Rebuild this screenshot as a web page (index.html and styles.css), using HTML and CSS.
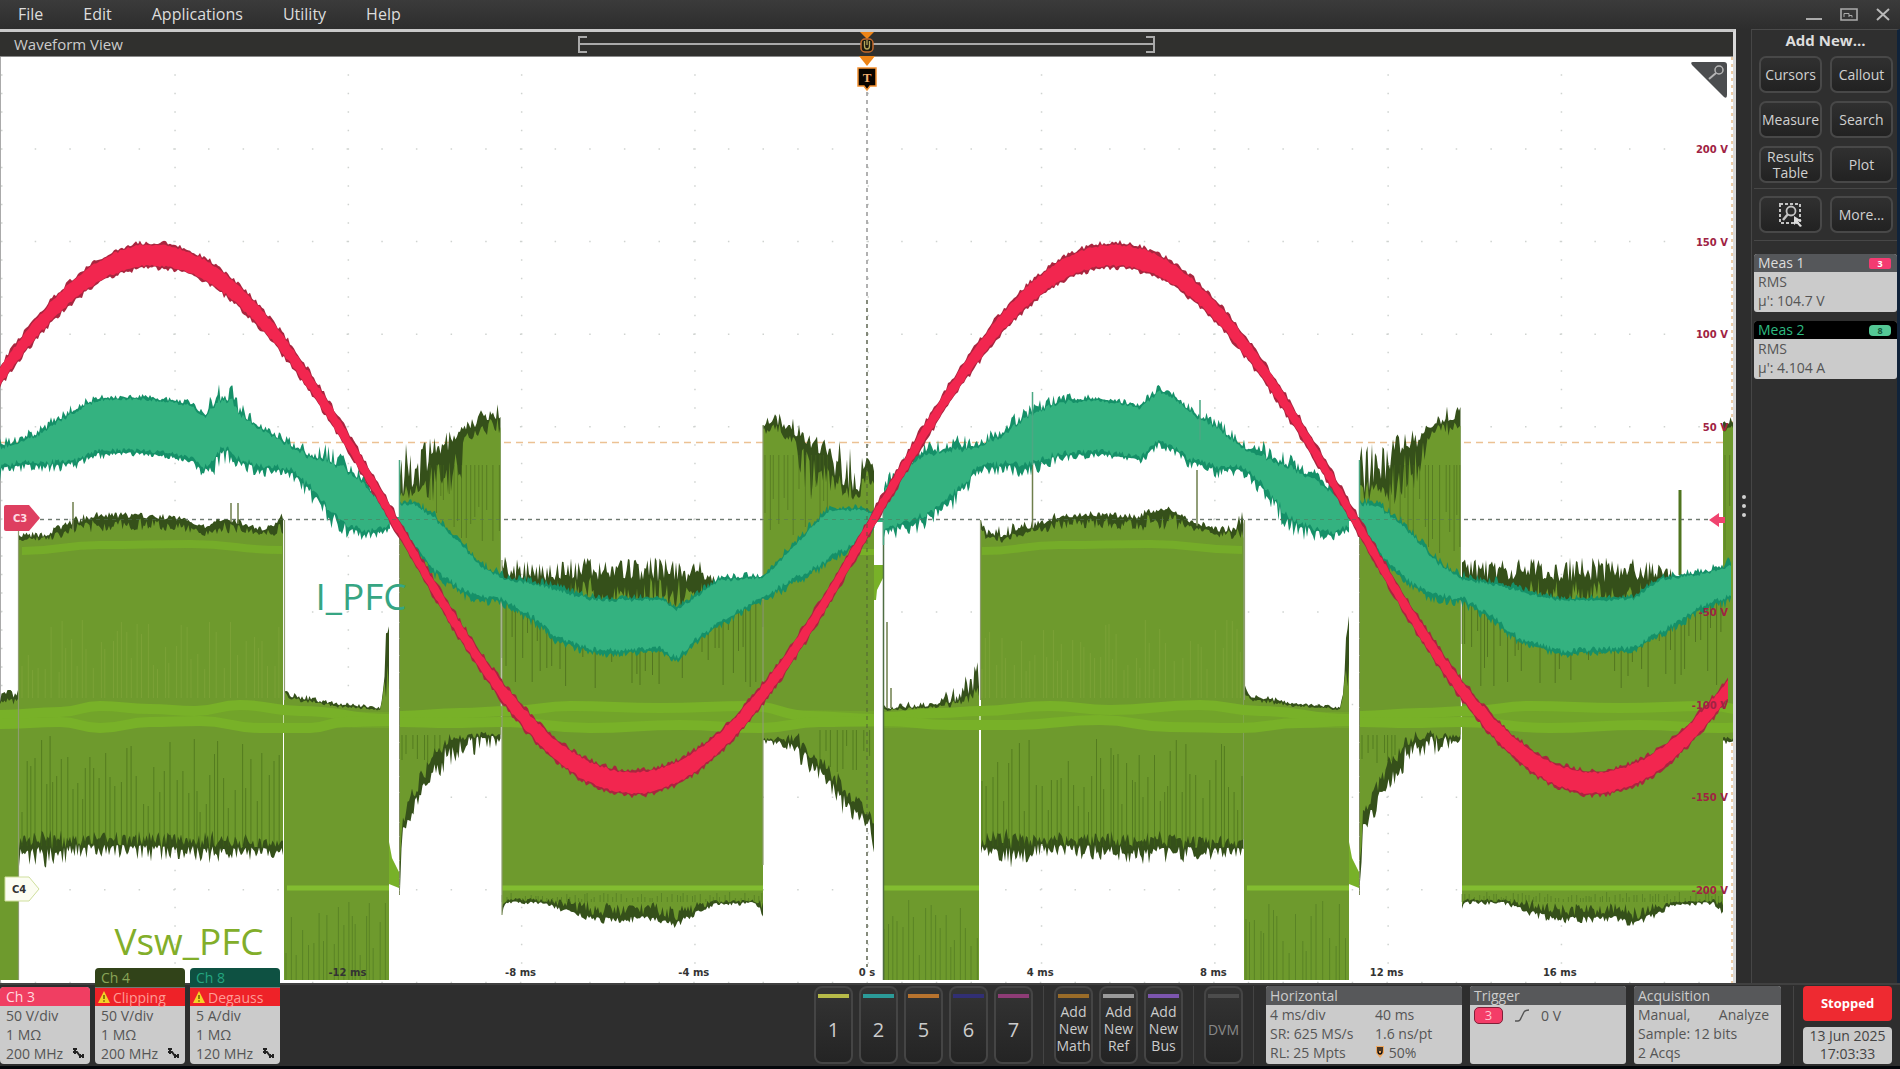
FILE: index.html
```html
<!DOCTYPE html>
<html lang="en">
<head>
<meta charset="utf-8">
<title>Waveform View</title>
<link rel="stylesheet" href="styles.css">
</head>
<body>
<header class="menubar">
  <nav class="menus">
    <button>File</button><button>Edit</button><button>Applications</button><button>Utility</button><button>Help</button>
  </nav>
  <div class="window-controls">
    <button aria-label="Minimize"><svg width="18" height="16"><path d="M1 12H17" stroke="#aaa" stroke-width="2"/></svg></button>
    <button aria-label="Restore"><svg width="18" height="16" fill="none" stroke="#aaa"><path d="M1 2H17V13H1Z" stroke-width="1.6"/><path d="M4 10V6.500H9V10M9 8.500H12V10.500"/></svg></button>
    <button aria-label="Close"><svg width="16" height="16"><path d="M2 2L14 13M14 2L2 13" stroke="#b8b8b8" stroke-width="2"/></svg></button>
  </div>
</header>

<main class="workspace">
  <section class="view">
    <div class="view-title">
      <h1>Waveform View</h1>
      <div class="range"></div>
    </div>
    <div class="plot">
      <svg class="waves" id="waves" viewBox="0 57 1733 926" preserveAspectRatio="none"></svg>
      <span class="tag-i">I_PFC</span>
      <span class="tag-v">Vsw_PFC</span>
      <svg class="marker marker-c3" width="36" height="26"><path d="M2 0H25L36 13L25 26H2Q0 26 0 24V2Q0 0 2 0Z" fill="#de3f60"/><text x="9" y="17">C3</text></svg>
      <svg class="marker marker-c4" width="36" height="26"><path d="M1 1H25L35 13L25 25H1Z" fill="#fcfdf2" stroke="#cfdf9d"/><text x="8" y="17" class="dark">C4</text></svg>
      <svg class="marker marker-level" width="16" height="16"><path d="M0 8L10 1V5H16V11H10V15Z" fill="#f0436f"/></svg>
      <svg class="corner" width="36" height="36"><path d="M2 0H33Q36 0 36 3V33Q36 37 33 35L1 3Q-1 0 2 0Z" fill="#4b4d4f"/><circle cx="28" cy="8" r="4" fill="none" stroke="#b5b5b5" stroke-width="1.500"/><path d="M25 11L18 17" stroke="#b5b5b5" stroke-width="2"/></svg>
      <div class="volts" id="volts"></div>
      <div class="times" id="times"></div>
    </div>
    <svg class="trigger-mark" width="22" height="60" viewBox="0 0 22 60">
      <path d="M4 0H18L11 7Z" fill="#ee8416"/>
      <rect x="5" y="7" width="12" height="13" rx="4" fill="#1d1b10" stroke="#c46a2c" stroke-width="1.500"/>
      <path d="M8.500 9V14Q8.500 17 11 17Q13.500 17 13.500 14V9M11 8V13" fill="none" stroke="#b5a75a" stroke-width="1.300"/>
      <path d="M3 24H19L11 34Z" fill="#ee8416"/>
      <path d="M2 36H20V54H14L11 58L8 54H2Z" fill="#080400" stroke="#f29030" stroke-width="1.500"/>
      <text x="11" y="50">T</text>
    </svg>
  </section>
  <button class="splitter" aria-label="Resize panel"><i></i><i></i><i></i></button>
  <aside class="panel">
    <h2>Add New...</h2>
    <div class="tools">
      <button>Cursors</button><button>Callout</button>
      <button>Measure</button><button>Search</button>
      <button>Results Table</button><button>Plot</button>
    </div>
    <div class="tools ruled">
      <button aria-label="Zoom area"><svg width="26" height="28" fill="none" stroke="#c4c4c4"><path d="M2 3H22V22H2Z" stroke-width="2" stroke-dasharray="3 2"/><circle cx="13" cy="10" r="4.500" stroke-width="1.800"/><path d="M10 13L5 19" stroke-width="2.500"/><path d="M16 15L24 20L20 20.500L24 25L22 26L18.500 22L16 24Z" fill="#ddd" stroke="none"/></svg></button><button>More...</button>
    </div>
    <article class="meas">
      <h3>Meas 1 <b class="pink">3</b></h3>
      <p>RMS</p><p>µ': 104.7 V</p>
    </article>
    <article class="meas active">
      <h3>Meas 2 <b>8</b></h3>
      <p>RMS</p><p>µ': 4.104 A</p>
    </article>
  </aside>
</main>

<footer class="settings">
  <div class="channels">
    <article class="channel c3"><h3>Ch 3</h3><p>50 V/div</p><p>1 MΩ</p><p>200 MHz <svg width="12" height="11"><use href="#probe"/></svg></p></article>
    <article class="channel c4"><h3>Ch 4</h3><h4><svg width="12" height="12"><use href="#warn"/></svg>Clipping</h4><p>50 V/div</p><p>1 MΩ</p><p>200 MHz <svg width="12" height="11"><use href="#probe"/></svg></p></article>
    <article class="channel c8"><h3>Ch 8</h3><h4><svg width="12" height="12"><use href="#warn"/></svg>Degauss</h4><p>5 A/div</p><p>1 MΩ</p><p>120 MHz <svg width="12" height="11"><use href="#probe"/></svg></p></article>
  </div>
  <div class="keys">
    <button class="key ch1">1</button><button class="key ch2">2</button><button class="key ch5">5</button><button class="key ch6">6</button><button class="key ch7">7</button>
  </div>
  <div class="keys small">
    <button class="key math">Add New Math</button><button class="key ref">Add New Ref</button><button class="key bus">Add New Bus</button>
  </div>
  <div class="keys small"><button class="key dvm">DVM</button></div>
  <div class="cards">
    <article class="card horizontal">
      <h3>Horizontal</h3>
      <div class="pairs"><span>4 ms/div</span><span>40 ms</span><span>SR: 625 MS/s</span><span>1.6 ns/pt</span><span>RL: 25 Mpts</span><span><svg width="10" height="12"><path d="M1 0H9V7L5 12L1 7Z" fill="#f0a860"/><path d="M3 1V5Q3 8 5 8Q7 8 7 5V1M5 1V5" fill="none" stroke="#111" stroke-width="1.500"/></svg> 50%</span></div>
    </article>
    <article class="card trigger">
      <h3>Trigger</h3>
      <div class="line"><b>3</b><svg width="16" height="15"><path d="M1 13H4Q6 13 7 10L10 4Q11 2 15 2" fill="none" stroke="#555" stroke-width="1.400"/></svg><span>0 V</span></div>
    </article>
    <article class="card acquisition">
      <h3>Acquisition</h3>
      <div class="split"><span>Manual,</span><span>Analyze</span></div>
      <p>Sample: 12 bits</p><p>2 Acqs</p>
    </article>
  </div>
  <div class="status">
    <button>Stopped</button>
    <time>13 Jun 2025<br>17:03:33</time>
  </div>
</footer>

<svg class="defs" width="0" height="0">
  <symbol id="warn" viewBox="0 0 12 12"><path d="M6 0L12 12H0Z" fill="#f5d327"/><path d="M6 4V8M6 9.300V10.800" stroke="#6b5200" stroke-width="1.400"/></symbol>
  <symbol id="probe" viewBox="0 0 12 11"><path d="M1 1H5M3 1V6M1 4H5L8 8M8 6V10M8 8H12M11 6V10" stroke="#222" stroke-width="2" fill="none"/></symbol>
</svg>
<script src="scope.js"></script>
</body>
</html>
```

FILE: styles.css
```css
* { box-sizing: border-box; }
body {
  margin: 0;
  min-height: 100vh;
  display: flex;
  flex-direction: column;
  background: #2e2e2e;
  color: #ccc;
  font: 14px/19px "Open Sans", "Noto Sans", sans-serif;
}
h1, h2, h3, h4, p { margin: 0; font: inherit; }
button { font: inherit; color: inherit; background: none; border: 0; padding: 0; }
svg { display: block; }
.defs { position: absolute; }

.menubar {
  height: 29px;
  display: flex;
  justify-content: space-between;
  align-items: center;
  padding: 0 9px 0 18px;
  background: linear-gradient(#3b3b3b, #2d2d2d);
}
.menus { display: flex; gap: 40px; font-size: 16px; color: #ddd; }
.window-controls { display: flex; gap: 17px; align-items: center; }

.workspace { flex: 1; display: grid; grid-template-columns: 1fr 15px 149px; }
.view {
  position: relative;
  display: flex;
  flex-direction: column;
  border-top: 3px solid #c9c9c9;
  border-right: 3px solid #d9d9d9;
}
.view-title {
  height: 25px;
  display: grid;
  grid-template-columns: 1fr 1fr 1fr;
  align-items: center;
  background: #30302e;
  border-bottom: 1px solid #8a8a8a;
}
.view-title h1 { padding-left: 14px; font-size: 15px; }
.range {
  height: 17px;
  border: 2px solid #aaa;
  border-width: 0 2px;
  background:
    linear-gradient(#aaa, #aaa) left top / 7px 2px,
    linear-gradient(#aaa, #aaa) left bottom / 7px 2px,
    linear-gradient(#aaa, #aaa) right top / 7px 2px,
    linear-gradient(#aaa, #aaa) right bottom / 7px 2px,
    linear-gradient(#aaa, #aaa) center / 100% 2px;
  background-repeat: no-repeat;
}
.plot { position: relative; flex: 1; background: #fff; overflow: hidden; }
.waves { position: absolute; inset: 0; width: 100%; height: 100%; }
.tag-i, .tag-v { position: absolute; font-size: 37px; line-height: 40px; font-weight: 500; }
.tag-i { left: 18.200%; top: 56%; color: #36a583; }
.tag-v { left: 6.600%; top: 93.300%; color: #82ae2a; }
.marker { position: absolute; left: 4px; font: bold 10px "DejaVu Sans", sans-serif; fill: #ffdbe2; }
.marker .dark { fill: #333; }
.marker-c3 { top: 48.400%; }
.marker-c4 { top: 88.400%; }
.marker-level { left: auto; right: 8px; top: 49.100%; }
.corner { position: absolute; right: 6px; top: 5px; }
.trigger-mark {
  position: absolute;
  left: 50%;
  top: 0;
  margin-left: -11px;
  font: bold 13px "Liberation Serif", serif;
  fill: #f5b070;
  text-anchor: middle;
}
.volts span, .times span {
  position: absolute;
  font: bold 10px/14px "DejaVu Sans", sans-serif;
  white-space: nowrap;
}
.volts span { right: 5px; margin-top: -6px; color: #a02343; }
.times span { bottom: 3px; width: 60px; margin-left: -30px; text-align: center; color: #333; }

.splitter {
  display: flex;
  flex-direction: column;
  align-items: center;
  justify-content: center;
  gap: 5px;
  background: #2d2d2d;
}
.splitter i { width: 4px; height: 4px; border-radius: 2px; background: #d0d0d0; }

.panel {
  padding: 0 0 0 2px;
  border-left: 1px solid #464646;
  border-top: 1px solid #4a4a4a;
  border-right: 3px solid #10233a;
  background: #2f2f2f;
}
.panel h2 { padding: 1px 0 6px; text-align: center; font-weight: 700; font-size: 15px; color: #ddd; }
.tools {
  display: grid;
  grid-template-columns: 1fr 1fr;
  gap: 8px;
  padding: 0 4px 5px 5px;
}
.tools.ruled { padding-top: 7px; padding-bottom: 7px; border: 1px solid #474747; border-width: 1px 0; margin-bottom: 13px; }
.tools button {
  height: 37px;
  display: flex;
  align-items: center;
  justify-content: center;
  border: 2px solid #484848;
  border-radius: 7px;
  background: linear-gradient(#303030, #222);
  line-height: 16px;
  color: #d0d0d0;
}
.meas { margin-bottom: 9px; border-radius: 3px; overflow: hidden; background: #cbcbcb; color: #555; padding-bottom: 2px; }
.meas h3 { height: 18px; line-height: 18px; display: flex; justify-content: space-between; align-items: center; padding: 0 6px 0 4px; background: #55575a; color: #ddd; }
.meas p { padding-left: 4px; }
.meas b { width: 22px; height: 11px; border-radius: 4px; background: #54c795; color: #155a3c; font: bold 9px/11px "Open Sans", sans-serif; text-align: center; }
.meas .pink { background: #f43b71; border-radius: 2px; color: #fff; }
.meas.active h3 { background: #000; color: #2dbb81; }

.settings {
  height: 86px;
  display: flex;
  align-items: flex-end;
  padding: 0 8px 2px 0;
  border-top: 2px solid #404040;
  border-bottom: 3px solid #04070b;
  background: #2e2e2e;
}
.channels { display: flex; align-items: flex-end; gap: 5px; margin-right: auto; }
.channel { position: relative; width: 90px; border-radius: 4px; overflow: hidden; background: #cbcbcb; color: #555; padding-bottom: 1px; }
.channel p { display: flex; align-items: center; justify-content: space-between; padding: 0 6px; }
.channel h3 { height: 19px; padding-left: 6px; line-height: 19px; background: #f03e62; color: #ffd9df; }
.channel h4 { display: flex; align-items: center; gap: 3px; height: 19px; padding-left: 3px; background: #ee2228; color: #ff9c96; border-top: 1px solid #777; }
.c4 h3 { background: #314319; color: #8aa658; }
.c8 h3 { background: #0e5142; color: #24a580; }

.keys { display: flex; gap: 6px; padding-right: 10px; margin-right: 10px; border-right: 1px solid #444; }
.key {
  width: 39px;
  height: 78px;
  border: 2px solid #454545;
  border-radius: 8px;
  background: linear-gradient(#343434, #242424);
  font-size: 20px;
  color: #ccc;
  display: flex;
  flex-direction: column;
  align-items: center;
}
.key::before { content: ""; width: 31px; height: 4px; margin: 6px 0 22px; background: #b6ba48; }
.keys.small .key { font-size: 14px; line-height: 17px; }
.keys.small .key::before { margin-bottom: 5px; }
.ch2::before { background: #2b9a98; }
.ch5::before { background: #b8732e; }
.ch6::before { background: #312f74; }
.ch7::before { background: #8e3c76; }
.math::before { background: #9a6c28; }
.ref::before { background: #9a9a9a; }
.bus::before { background: #7c55ae; }
.keys.small .dvm { color: #888; }
.keys.small .dvm::before { background: #4c4c4c; margin-bottom: 23px; }

.cards { display: flex; gap: 8px; margin-left: 2px; padding-right: 12px; margin-right: 9px; border-right: 1px solid #444; }
.card { height: 78px; border-radius: 3px; overflow: hidden; background: #cbcbcb; color: #555; }
.card h3 { height: 19px; padding-left: 4px; background: #57585a; color: #ccc; }
.card p { padding-left: 4px; }
.horizontal { width: 196px; }
.trigger { width: 156px; }
.acquisition { width: 147px; }
.pairs { display: grid; grid-template-columns: 105px 1fr; padding-left: 4px; }
.pairs svg { display: inline; }
.line { display: flex; align-items: center; gap: 11px; padding: 1px 4px; }
.line b { width: 29px; height: 17px; border: 1px solid #7e2038; border-radius: 5px; background: #f43d68; color: #ffc7d2; text-align: center; font: 13px/15px "Open Sans", sans-serif; }
.split { display: flex; justify-content: space-between; padding: 0 12px 0 4px; }
.status { width: 89px; display: grid; gap: 6px; }
.status button { height: 35px; border-radius: 4px; background: #ee2a31; color: #fff; font-weight: 700; font-size: 13px; }
.status time { height: 37px; border-radius: 4px; background: #cbcbcb; color: #444; text-align: center; line-height: 18px; }
```

FILE: scope.js
```js
// Draws the captured channels into the plot from their envelope points.
let seed = 7;
const rnd = () => (seed = (seed * 16807) % 2147483647) / 2147483647;
const out = [];
const PERIOD = 960;
const shift = (pts) => pts.map((p) => [p[0] + PERIOD, ...p.slice(1)]);

// Each point is [x, y, spike height, edge depth].
function at(pts, x) {
  let i = 0;
  while (i < pts.length - 2 && x > pts[i + 1][0]) i++;
  const a = pts[i], b = pts[i + 1];
  const t = Math.max(0, Math.min(1, (x - a[0]) / (b[0] - a[0])));
  const mix = (k, d) => { const p = a[k] ?? d, q = b[k] ?? d; return p + (q - p) * t; };
  return [mix(1, 0), mix(2, 5), mix(3, 3)];
}

function spike(n) {
  return n > 20 ? rnd() * n : rnd() ** 1.600 * n * 1.150;
}

function band(top, bot, fill, edge, step = 1.5) {
  const x0 = top[0][0], x1 = top[top.length - 1][0];
  const ot = [], ob = [], it = [], ib = [];
  for (let x = x0; x <= x1; x += step) {
    const [ty, tn, td] = at(top, x), [by, bn, bd] = at(bot, x);
    const r1 = spike(tn), r2 = spike(bn), X = x.toFixed(1);
    ot.push(X + "," + (ty - r1).toFixed(1));
    ob.unshift(X + "," + (by + r2).toFixed(1));
    it.push(X + "," + (ty - r1 * 0.35 + td * (0.1 + rnd() * 0.95)).toFixed(1));
    ib.unshift(X + "," + (by + r2 * 0.35 - bd * (0.1 + rnd() * 0.95)).toFixed(1));
  }
  out.push(`<polygon fill="${edge}" points="${ot.concat(ob).join(" ")}"/>`);
  out.push(`<polygon fill="${fill}" points="${it.concat(ib).join(" ")}"/>`);
}

function streaks(x0, x1, y0, y1, gap, color, fromTop) {
  let d = "";
  for (let x = x0; x < x1; x += gap * (0.5 + rnd())) {
    const k = rnd() * (y1 - y0) * 0.7;
    d += fromTop ? `M${x.toFixed(1)},${y0}V${(y1 - k).toFixed(0)}` : `M${x.toFixed(1)},${(y0 + k).toFixed(0)}V${y1}`;
  }
  out.push(`<path d="${d}" stroke="${color}" stroke-width="1" opacity=".55"/>`);
}

function ribbon(pts, w, color, opacity = 1) {
  let d = `M${pts[0][0]},${pts[0][1]}`;
  for (let i = 1; i < pts.length; i++) {
    const a = pts[i - 1], b = pts[i], m = (a[0] + b[0]) / 2;
    d += `C${m},${a[1]} ${m},${b[1]} ${b[0]},${b[1]}`;
  }
  out.push(`<path d="${d}" fill="none" stroke="${color}" stroke-width="${w}" opacity="${opacity}"/>`);
}

// Graticule
let dots = "";
for (let i = 0; i <= 50; i++) for (let j = 0; j < 10; j++) dots += `M${(i * 34.66).toFixed(1)},${149 + j * 92.6}h1.500`;
for (let i = 0; i <= 9; i++) for (let j = 0; j < 49; j++) dots += `M${(i * 173.3 + 1).toFixed(1)},${(75 + j * 18.5).toFixed(1)}h1.500`;
out.push(`<path d="${dots}" stroke="#cfd3d0" stroke-width="1.500"/>`);
out.push('<path d="M0.500 57V983" stroke="#aaa"/>');
out.push('<path d="M1732 57V983" stroke="#e8bd8b" stroke-width="1.500" stroke-dasharray="3 4"/>');
out.push('<path d="M0 442.500H1732" stroke="#ecc193" stroke-width="1.400" stroke-dasharray="7 5"/>');
out.push('<path d="M40 519.500H1710M867 92V967" stroke="#888" stroke-width="1.300" stroke-dasharray="4 4"/>');

// Channel 4: switching node
const G = "#6e9a2d", D = "#35501a";
const full = (a, b) => [[a, 980, 0, 0], [b, 980, 0, 0]];
const s1t = [[19, 538, 5, 5], [45, 537, 5, 5], [70, 526, 8, 10], [98, 518, 6, 14], [140, 518, 5, 14], [185, 521, 5, 12], [207, 529, 3, 8], [223, 520, 6, 14], [240, 525, 5, 8], [262, 531, 4, 6], [284, 524, 12, 12]];
const s7t = [[981, 528, 12, 8], [988, 537, 12, 6], [1005, 537, 10, 6], [1035, 528, 10, 8], [1060, 518, 6, 12], [1090, 516, 5, 14], [1138, 519, 5, 12], [1150, 513, 6, 16], [1172, 512, 6, 18], [1190, 523, 5, 8], [1220, 532, 5, 6], [1234, 532, 8, 8], [1244, 524, 14, 14]];
const s1b = [[19, 846, 20, 18], [60, 848, 18, 18], [75, 844, 12, 12], [200, 846, 17, 16], [284, 848, 8, 10]];
const s2t = [[284, 690, 10, 6], [292, 698, 6, 4], [330, 704, 3, 3], [380, 709, 3, 2], [384, 690, 10, 5], [386, 640, 12, 60], [389, 628, 12, 70]];
const s3t = [[400, 496, 54, 10], [425, 488, 46, 14], [432, 462, 26, 50], [460, 446, 18, 50], [468, 432, 12, 14], [485, 422, 16, 14], [501, 418, 14, 14]];
const s3b = [[400, 858, 35, 8], [403, 824, 8, 14], [412, 806, 16, 20], [430, 768, 22, 18], [444, 747, 28, 14], [458, 737, 22, 8], [480, 736, 16, 5], [501, 736, 8, 4]];
const s4t = [[502, 566, 12, 30], [510, 580, 18, 34], [560, 582, 24, 34], [640, 582, 26, 34], [700, 582, 22, 34], [720, 584, 6, 10], [763, 580, 4, 8]];
const s4b = [[502, 905, 12, 4], [506, 901, 3, 3], [545, 902, 3, 4], [572, 911, 6, 13], [600, 917, 6, 14], [655, 916, 6, 14], [675, 922, 6, 16], [700, 909, 6, 8], [715, 903, 3, 3], [754, 902, 3, 3], [763, 910, 6, 12]];
const s5t = [[763, 428, 5, 8], [772, 422, 10, 10], [795, 436, 16, 12], [802, 442, 12, 50], [820, 454, 18, 50], [835, 484, 44, 14], [860, 497, 58, 8], [863, 476, 12, 16], [866, 462, 8, 20], [874, 474, 8, 20]];
const s5b = [[763, 740, 3, 3], [785, 741, 8, 6], [800, 746, 16, 14], [830, 779, 18, 16], [850, 802, 18, 16], [870, 818, 12, 14], [874, 830, 34, 14]];
band([[0, 702, 12, 5], [19, 700, 10, 5]], full(0, 19), G, D);
band(s1t, s1b, G, D);
band(s2t, full(284, 389), G, D);
for (const m of [(p) => p, shift]) {
  band(m(s3t), m(s3b), G, D);
  band(m(s4t), m(s4b), G, D);
  band(m(s5t), m(s5b), G, D);
}
band([[883, 710, 6, 2], [935, 706, 6, 3], [960, 702, 20, 5], [980, 695, 40, 6]], full(883, 980), G, D);
band(s7t, shift(s1b), G, D);
band(shift(s2t), full(1244, 1349), G, D);

const B = "#78b128";
for (const o of [0, PERIOD]) {
  const r = (a) => a.map((p) => [p[0] + o, p[1]]);
  ribbon(r([[22, 551], [100, 545], [190, 544], [282, 550]]), 8, B, 0.75);
  ribbon(r([[400, 719], [460, 718], [520, 716], [600, 716], [700, 716], [790, 718], [874, 719]]), 16, B, 0.45);
  ribbon(r([[400, 716], [460, 713], [510, 711], [570, 706], [660, 708], [750, 706], [810, 716], [874, 719]]), 10, B);
  ribbon(r([[400, 722], [450, 723], [500, 722], [590, 728], [680, 725], [760, 728], [820, 722], [874, 721]]), 10, B);
  ribbon(r([[502, 888], [763, 888]]), 5, "#82bd30");
  ribbon(r([[287, 888], [389, 888]]), 5, "#82bd30");
  out.push(`<path d="M${389 + o},842L${392 + o},858L${399 + o},872V888L${389 + o},884Z" fill="${B}"/>`);
  ribbon(r([[399.500, 520], [399.500, 895]]), 1, "#7d8a5c");
  streaks(22 + o, 282 + o, 735, 846, 5, "#3f6416");
  streaks(22 + o, 282 + o, 620, 698, 6, "#86a83f");
  streaks(286 + o, 388 + o, 900, 980, 5, "#4a7320");
  streaks(430 + o, 500 + o, 465, 560, 5, "#46671b", true);
  streaks(402 + o, 440 + o, 735, 765, 5, "#3f6416", true);
  streaks(502 + o, 763 + o, 600, 690, 5, "#3e5a18", true);
  streaks(502 + o, 763 + o, 892, 902, 4, "#4a7320");
  streaks(765 + o, 830 + o, 455, 560, 5, "#4a6b1f", true);
  streaks(820 + o, 873 + o, 730, 775, 5, "#3f6416", true);
}
for (const y of [[[0, 718], [200, 716], [389, 720]], [[883, 720], [1100, 716], [1349, 720]]]) ribbon(y, 16, B, 0.45);
ribbon([[0, 715], [60, 712], [100, 706], [150, 709], [195, 711], [240, 705], [300, 711], [389, 719]], 10, B);
ribbon([[0, 724], [60, 722], [100, 728], [150, 722], [200, 721], [260, 728], [310, 728], [345, 722], [389, 721]], 10, B);
ribbon([[883, 717], [940, 713], [980, 711], [1050, 706], [1110, 710], [1200, 705], [1260, 711], [1349, 719]], 10, B);
ribbon([[883, 721], [950, 725], [1010, 725], [1100, 720], [1170, 727], [1240, 728], [1300, 723], [1349, 721]], 10, B);
ribbon([[883, 888], [979, 888]], 5, "#82bd30");
ribbon([[858, 552], [874, 552]], 6, B);
streaks(884, 979, 900, 980, 5, "#4a7320");
out.push('<path d="M874 565H884V576L877 590L876 600H874Z" fill="#78b128"/><path d="M18.500 530V980M284.500 520V700M980.500 520V700M1244.500 520V700M502 560V915M763 425V865" stroke="#8e9d70" stroke-width="1.200"/><path d="M73 502V530M231 503V522M238 503V524M1032.500 440V528M1197 470V526M1680 490V575M887 622V708M891 688V708" stroke="#6f7f4c" stroke-width="1.500"/><path d="M883.500 500V980" stroke="#4f6e43" stroke-width="1.500"/><path d="M1680 490V575" stroke="#4f741f" stroke-width="3"/>');

// Channel 8: inductor current
const T = "#34b280", E = "#159068";
const both = (rows, n = 8) => band(rows.map((r) => [r[0], r[1], r[3] ?? n, 3]), rows.map((r) => [r[0], r[2], r[3] ?? n, 5]), T, E);
both([[0, 448, 468, 12], [20, 442, 464], [40, 434, 464], [60, 420, 463], [75, 411, 461], [98, 399, 453, 6], [140, 398, 452, 4], [175, 402, 456, 4], [193, 406, 461, 6], [204, 417, 470, 8], [214, 406, 458, 16], [224, 399, 448, 16], [232, 404, 452, 18], [240, 416, 462, 12], [260, 428, 467], [290, 446, 470], [310, 457, 488, 14], [330, 462, 510, 16], [345, 470, 523, 14], [360, 480, 531, 10], [375, 496, 532, 8], [390, 512, 528, 4]]);
const trough = [[399, 504, 528], [415, 504, 547], [433, 517, 570], [450, 532, 583], [465, 548, 593], [480, 565, 597], [502, 578, 600], [535, 584, 620], [560, 591, 641], [600, 600, 653, 5], [660, 598, 650, 4]];
both([...trough, [676, 609, 660, 4], [700, 593, 638, 5], [720, 579, 624, 5], [763, 577, 598, 6], [790, 550, 583, 7], [820, 518, 566, 7], [833, 509, 557, 6], [865, 509, 540, 4], [875, 514, 525, 3]], 7);
both([[884, 490, 530, 10], [900, 473, 525, 12], [920, 459, 518, 14], [940, 452, 506, 14], [965, 450, 484, 14], [980, 446, 466], [1000, 437, 465, 12], [1030, 416, 463, 12], [1060, 402, 455], [1100, 399, 453, 4], [1139, 407, 459, 5], [1150, 399, 451, 6], [1158, 391, 442, 6], [1175, 398, 450, 6], [1190, 412, 460], [1215, 427, 467, 10], [1245, 449, 470], [1265, 459, 488, 16], [1290, 468, 518, 16], [1310, 478, 528, 12], [1330, 490, 534, 8], [1350, 512, 528, 4]]);
both([...shift(trough), [1634, 598, 650, 5], [1660, 579, 633, 6], [1680, 576, 622, 6], [1700, 574, 608, 6], [1732, 566, 597, 10]], 7);
out.push('<path d="M386 519H402M870 520H886M1348 519H1362" stroke="#34b280" stroke-width="4"/><path d="M883.500 495V545M399.500 460V520M1359.500 460V520M1032.500 392V465M1200 400V440" stroke="#4ba883" stroke-width="1.500"/>');

// Channel 3: line voltage
const rt = [], rb = [];
for (let x = 0; x <= 1736; x += 12) {
  const c = Math.cos((2 * Math.PI * (x - 153)) / 961), h = 8 + 3 * c * c;
  const y = 519 - 264 * c;
  rt.push([x, y - h, 4, 2]);
  rb.push([x, y + h, 4, 2]);
}
band(rt, rb, "#f2264f", "#a8263f", 2);
out.push('<path d="M867 300V967" stroke="#4d5a38" stroke-width="1.200" stroke-dasharray="4 4" opacity=".7"/><path d="M40 519.500H1710" stroke="#55705a" stroke-dasharray="4 4" opacity=".5"/>');
document.getElementById("waves").innerHTML = out.join("");

// Scale labels
const pct = (v) => v.toFixed(3) + "%";
document.getElementById("volts").innerHTML = [200, 150, 100, 50, -50, -100, -150, -200]
  .map((v) => `<span style="top:${pct(((519.5 - v * 1.852 - 57) / 926) * 100)}">${v} V</span>`).join("");
document.getElementById("times").innerHTML = [-12, -8, -4, 0, 4, 8, 12, 16]
  .map((t) => `<span style="left:${pct(((867 + t * 43.3) / 1733) * 100)}">${t ? t + " ms" : "0 s"}</span>`).join("");
```
